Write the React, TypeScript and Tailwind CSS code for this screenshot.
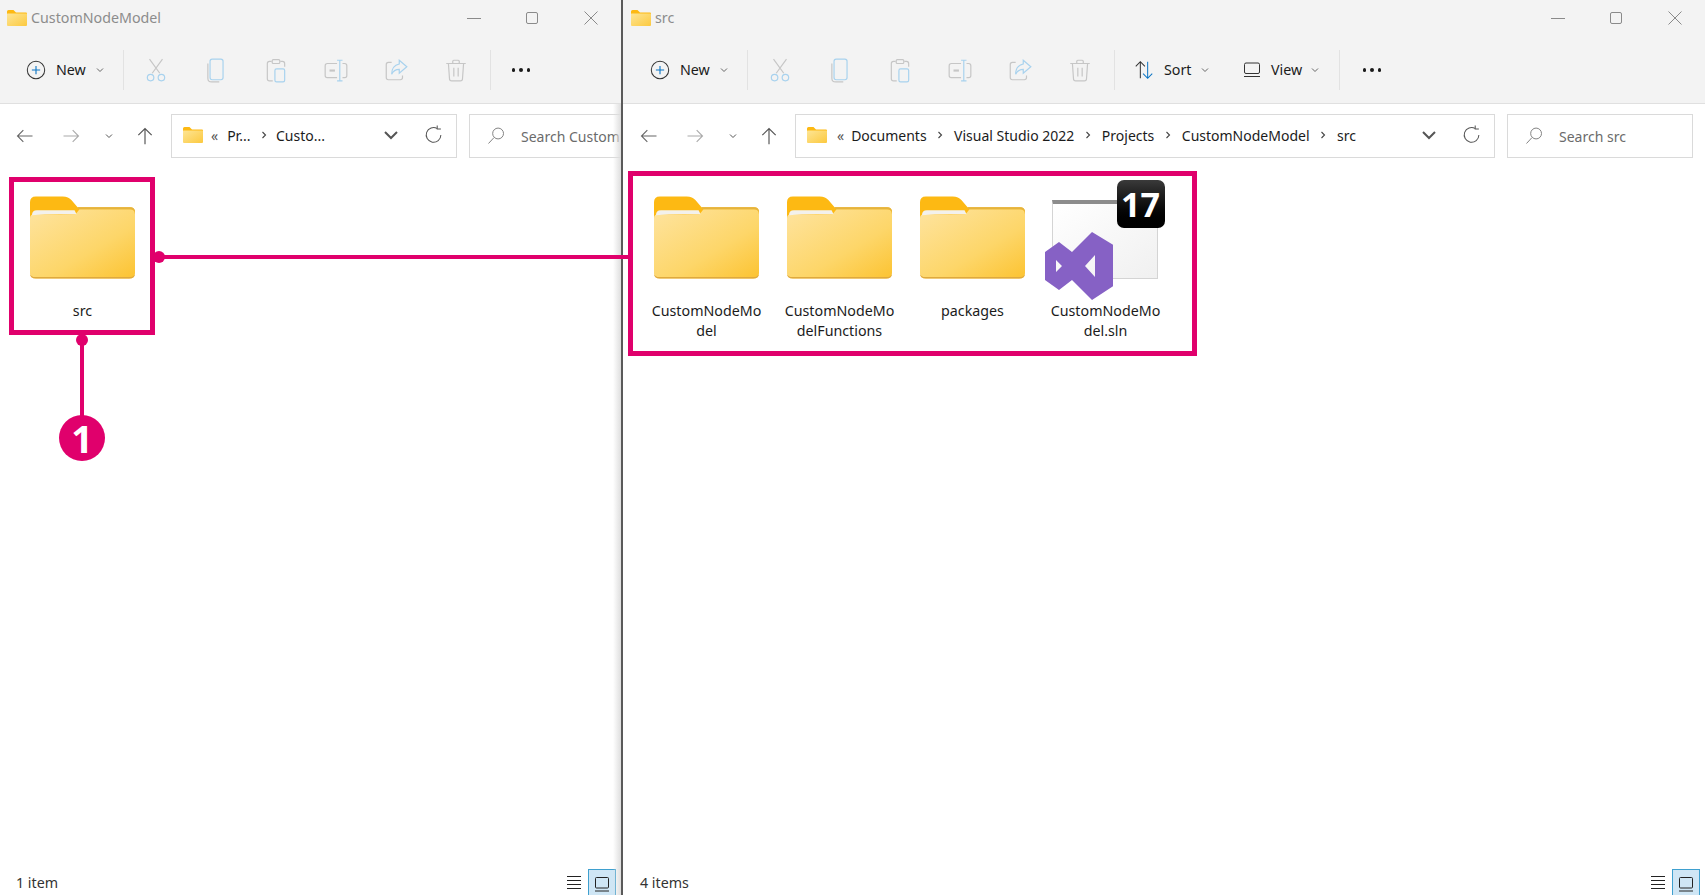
import React from 'react'

const pink = '#e0006c'

// small stroke icon wrapper, all toolbar glyphs are drawn in a 24 box
const Ico = ({ children, size = 24 }: { children: React.ReactNode; size?: number }) => (
    <svg width={size} height={size} viewBox="0 0 24 24" fill="none" strokeWidth="1.1" className="shrink-0">
        {children}
    </svg>
)

const FolderSmall = () => (
    <svg width="20" height="16" viewBox="0 0 20 16" className="shrink-0">
        <defs>
            <linearGradient id="fs" x1="0" y1="0" x2="1" y2="1">
                <stop offset="0" stopColor="#fde595" />
                <stop offset="1" stopColor="#fcc93f" />
            </linearGradient>
        </defs>
        <path d="M0 1.5Q0 0 1.5 0H6.5L9 2.5H19Q20 2.5 20 3.5V5H0Z" fill="#fdb913" />
        <path d="M0 4Q0 3.5 .5 3.5H19.5Q20 3.5 20 4V15Q20 16 19 16H1Q0 16 0 15Z" fill="url(#fs)" />
    </svg>
)

const FolderBig = () => (
    <svg width="105" height="83" viewBox="0 0 106 83" className="shrink-0">
        <defs>
            <linearGradient id="fb" x1="0.05" y1="0" x2="0.95" y2="1">
                <stop offset="0" stopColor="#fee39d" />
                <stop offset="0.6" stopColor="#fdd669" />
                <stop offset="1" stopColor="#fcc434" />
            </linearGradient>
        </defs>
        <path d="M0 6Q0 0 6 0H33Q39 0 42 4L48 11H101Q106 11 106 16V30H0Z" fill="#fdb913" />
        <path d="M0 22Q0 18 4 18H46L50 13H101Q106 13 106 18V77Q106 83 100 83H6Q0 83 0 77Z" fill="url(#fb)" />
        <path d="M2 19Q2 14 7 14H45L47 18Q20 17 2 19Z" fill="#f3f1ec" />
        <path d="M0 77Q0 81.500 6 81.500H100Q106 81.500 106 77V77.500Q106 83 100 83H6Q0 83 0 77.500Z" fill="#dfa93e" />
        <path d="M48 11H101Q106 11 106 16V18Q106 13 101 13H49Z" fill="#e4b33f" />
    </svg>
)

const SlnLogo = () => (
    <svg width="68" height="68" viewBox="0 0 68 68">
        <path
            fillRule="evenodd"
            fill="#8661c5"
            d="M47 0L68 12.700V54.300L47 68L27 48L14 58L0 48V20L14 10L27 20ZM11 28V40L17 34ZM50 23L40 34L50 45Z"
        />
    </svg>
)

const Chevron = ({ size = 10, color = '#666' }: { size?: number; color?: string }) => (
    <svg width={size} height={size} viewBox="0 0 10 10" fill="none" stroke={color} strokeWidth="1" className="shrink-0">
        <path d="M2 3.500L5 6.500L8 3.500" />
    </svg>
)

const Sep = () => (
    <span className="w-[27.500px] flex justify-center shrink-0">
        <svg width="8" height="10" viewBox="0 0 8 10" fill="none" stroke="#444" strokeWidth="1.100">
            <path d="M2.500 2L5.500 5L2.500 8" />
        </svg>
    </span>
)

const gray = '#c6c6c6'
const blue = '#a8d2ee'

const CmdIcons = () => (
    <>
        <div className="w-[60px] flex justify-center">
            <Ico size={26}>
                <path d="M6 2L15.500 15M18 2L8.500 15" stroke={gray} />
                <circle cx="7" cy="19" r="3" stroke={blue} />
                <circle cx="17" cy="19" r="3" stroke={blue} />
            </Ico>
        </div>
        <div className="w-[60px] flex justify-center">
            <Ico size={26}>
                <rect x="6.500" y="2" width="12" height="19" rx="2" stroke={blue} />
                <path d="M4.500 6V19.500Q4.500 23 8 23H15" stroke={gray} />
            </Ico>
        </div>
        <div className="w-[60px] flex justify-center">
            <Ico size={26}>
                <path d="M8 4H6Q4 4 4 6V20Q4 22 6 22H9M16 4H18Q20 4 20 6V9" stroke={gray} />
                <rect x="8.500" y="2.500" width="7" height="3.500" rx="1" stroke={gray} />
                <rect x="11" y="11" width="9" height="12" rx="1.500" stroke={blue} />
            </Ico>
        </div>
        <div className="w-[60px] flex justify-center">
            <Ico size={26}>
                <path d="M13 6H4Q2 6 2 8V17Q2 19 4 19H13M18 6H20Q22 6 22 8V17Q22 19 20 19H18" stroke={gray} />
                <path d="M6 12.500H11" stroke={gray} strokeWidth="2" />
                <path d="M13 3H18M13 22H18M15.500 3V22" stroke={blue} />
            </Ico>
        </div>
        <div className="w-[60px] flex justify-center">
            <Ico size={26}>
                <path d="M8 5H5Q3 5 3 7V19Q3 21 5 21H16Q18 21 18 19V17" stroke={gray} />
                <path d="M15 3L22 9L15 15V11.500Q10 11.500 8 16Q8 8 15 6.500Z" stroke={blue} />
            </Ico>
        </div>
        <div className="w-[60px] flex justify-center">
            <Ico size={26}>
                <path d="M3 6H21M9 6V4Q9 3 10 3H14Q15 3 15 4V6M5 6L6 20Q6 22 8 22H16Q18 22 18 20L19 6M10 10V18M14 10V18" stroke={gray} />
            </Ico>
        </div>
    </>
)

const Divider = () => <div className="w-px h-[40px] bg-[#e2e2e2] shrink-0" />

const Dots = () => (
    <div className="w-[60px] flex justify-center gap-[4px]">
        <span className="w-[3.500px] h-[3.500px] rounded-full bg-[#1a1a1a]" />
        <span className="w-[3.500px] h-[3.500px] rounded-full bg-[#1a1a1a]" />
        <span className="w-[3.500px] h-[3.500px] rounded-full bg-[#1a1a1a]" />
    </div>
)

const NewButton = () => (
    <div className="w-[98px] flex items-center shrink-0">
        <Ico size={22}>
            <circle cx="12" cy="12" r="9.500" stroke="#333" />
            <path d="M12 7.500V16.500M7.500 12H16.500" stroke="#0a74c4" strokeWidth="1.200" />
        </Ico>
        <span className="ml-[9px] w-[33px] text-[#1b1b1b]">New</span>
        <span className="ml-[6px]"><Chevron /></span>
    </div>
)

const WindowControls = () => (
    <div className="flex items-center ml-auto">
        <svg width="14" height="14" viewBox="0 0 14 14" stroke="#8a8a8a" fill="none"><path d="M0 7.500H14" /></svg>
        <svg width="14" height="14" viewBox="0 0 14 14" stroke="#8a8a8a" fill="none" className="ml-[44px]"><rect x="1.500" y="1.500" width="11" height="11" rx="1.500" /></svg>
        <svg width="16" height="16" viewBox="0 0 16 16" stroke="#8a8a8a" fill="none" className="ml-[44px]"><path d="M1.500 1.500L14.500 14.500M14.500 1.500L1.500 14.500" /></svg>
    </div>
)

const NavButtons = () => (
    <>
        <div className="w-[50px] flex justify-center shrink-0">
            <Ico size={20}><path d="M21 12H3M10 5L3 12L10 19" stroke="#666" strokeWidth="1.300" /></Ico>
        </div>
        <div className="w-[42px] flex justify-center shrink-0">
            <Ico size={20}><path d="M3 12H21M14 5L21 12L14 19" stroke="#aaa" strokeWidth="1.300" /></Ico>
        </div>
        <div className="w-[34px] flex justify-center shrink-0"><Chevron color="#555" /></div>
        <div className="w-[38px] flex justify-center shrink-0">
            <Ico size={20}><path d="M12 22V3M4 11L12 3L20 11" stroke="#555" strokeWidth="1.400" /></Ico>
        </div>
    </>
)

const AddressEnd = () => (
    <>
        <span className="ml-auto"><Chevron size={20} color="#555" /></span>
        <span className="ml-[22px] mr-[11px]">
            <Ico size={22}>
                <path d="M19.500 12A8 8 0 1 1 15.500 5M15.500 1.500V5.500H19.500" stroke="#555" strokeWidth="1.100" />
            </Ico>
        </span>
    </>
)

const SearchBox = ({ label, className }: { label: string; className: string }) => (
    <div className={`h-[44px] border border-[#dadada] flex items-center pl-[16px] shrink-0 whitespace-nowrap text-[14px] ${className}`}>
        <Ico size={20}>
            <circle cx="14.500" cy="9" r="6.500" stroke="#777" />
            <path d="M9.500 14L3 21" stroke="#777" />
        </Ico>
        <span className="ml-[15px] text-[#6b6b6b]">{label}</span>
    </div>
)

const Tile = ({ lines, children }: { lines: string[]; children: React.ReactNode }) => (
    <div className="w-[133px] flex flex-col items-center shrink-0">
        <div className="relative h-[83px] w-[106px]">{children}</div>
        <div className="mt-[22px] text-center text-[#1b1b1b] leading-[20px]">
            {lines.map((line) => <div key={line}>{line}</div>)}
        </div>
    </div>
)

const StatusBar = ({ label }: { label: string }) => (
    <div className="h-[26px] flex items-end shrink-0">
        <span className="ml-[16px] mb-[2px] text-[#333]">{label}</span>
        <div className="ml-auto mr-[5px] flex items-center">
            <svg width="16" height="14" viewBox="0 0 16 14" stroke="#222" fill="none" className="mr-[6px]">
                <path d="M1 1.500H15M1 5.500H15M1 9.500H15M1 13.500H15" />
            </svg>
            <div className="w-[28px] h-[26px] bg-[#cfe6f5] border border-[#3fa0cf] border-b-0 flex items-center justify-center pt-[3px]">
                <svg width="16" height="15" viewBox="0 0 16 15" stroke="#222" fill="none">
                    <rect x="1.500" y=".5" width="13" height="10.500" rx="1" />
                    <path d="M1 14H15" />
                </svg>
            </div>
        </div>
    </div>
)

export default function App() {
    return (
        <div
            className="w-[1705px] h-[895px] flex overflow-hidden bg-white text-[14.25px]"
            style={{ fontFamily: '"Noto Sans", "Open Sans", sans-serif' }}
        >
            {/* left window */}
            <div className="relative w-[621px] h-full flex flex-col shrink-0 overflow-hidden">
                <div className="bg-[#f3f3f3] h-[104px] border-b border-[#e0e0e0] shrink-0">
                    <div className="h-[35px] flex items-center pl-[7px] pr-[22px]">
                        <FolderSmall />
                        <span className="ml-[4px] text-[#8c8c8c]">CustomNodeModel</span>
                        <WindowControls />
                    </div>
                    <div className="h-[68px] flex items-center pl-[25px] pt-[2px]">
                        <NewButton />
                        <Divider />
                        <div className="ml-[2px] flex items-center"><CmdIcons /></div>
                        <div className="ml-[4px]"><Divider /></div>
                        <Dots />
                    </div>
                </div>
                <div className="h-[66px] flex items-center shrink-0 pb-[2px]">
                    <NavButtons />
                    <div className="ml-[7px] w-[286px] h-[44px] border border-[#dadada] flex items-center pl-[11px] pb-[2px] shrink-0 text-[#1b1b1b] text-[14px]">
                        <FolderSmall />
                        <span className="ml-[8px] text-[#555]">«</span>
                        <span className="ml-[9px]">Pr...</span>
                        <Sep />
                        <span className="-ml-[2px]">Custo...</span>
                        <AddressEnd />
                    </div>
                    <SearchBox label="Search CustomNodeModel" className="ml-[12px] w-[220px]" />
                </div>
                <div className="flex-1 pl-[16px] pt-[26px] flex">
                    <Tile lines={['src']}><FolderBig /></Tile>
                </div>
                <StatusBar label="1 item" />
                {/* soft edge against the other window */}
                <div className="absolute right-0 top-[104px] bottom-0 w-[8px] bg-gradient-to-r from-transparent to-[#dedede]" />
            </div>

            <div className="w-[2px] h-full bg-[#5a5a5a] shrink-0" />

            {/* right window */}
            <div className="relative flex-1 h-full flex flex-col pl-px">
                <div className="bg-[#f3f3f3] h-[104px] border-b border-[#e0e0e0] shrink-0 -ml-px pl-px">
                    <div className="h-[35px] flex items-center pl-[7px] pr-[22px]">
                        <FolderSmall />
                        <span className="ml-[4px] text-[#8c8c8c]">src</span>
                        <WindowControls />
                    </div>
                    <div className="h-[68px] flex items-center pl-[25px] pt-[2px]">
                        <NewButton />
                        <Divider />
                        <div className="ml-[2px] flex items-center"><CmdIcons /></div>
                        <div className="ml-[4px]"><Divider /></div>
                        <div className="ml-[18px] flex items-center w-[84px] shrink-0">
                            <Ico size={22}>
                                <path d="M8 21V3M3 8L8 3L13 8" stroke="#333" />
                                <path d="M16 3V21M11 16L16 21L21 16" stroke="#0a74c4" />
                            </Ico>
                            <span className="ml-[9px] text-[#1b1b1b] w-[33px]">Sort</span>
                            <span className="ml-[3px]"><Chevron /></span>
                        </div>
                        <div className="ml-[26px] flex items-center w-[92px] shrink-0">
                            <svg width="18" height="16" viewBox="0 0 18 16" stroke="#333" fill="none" className="shrink-0">
                                <rect x="1.500" y="1" width="15" height="10.500" rx="1.500" />
                                <path d="M1 14.500H17" />
                            </svg>
                            <span className="ml-[10px] text-[#1b1b1b] w-[34px]">View</span>
                            <span className="ml-[5px]"><Chevron /></span>
                        </div>
                        <div className="ml-[4px]"><Divider /></div>
                        <div className="ml-[2px]"><Dots /></div>
                    </div>
                </div>
                <div className="h-[66px] flex items-center shrink-0 pb-[2px]">
                    <NavButtons />
                    <div className="ml-[7px] w-[700px] h-[44px] border border-[#dadada] flex items-center pl-[11px] pb-[2px] shrink-0 text-[#1b1b1b] whitespace-nowrap text-[14px]">
                        <FolderSmall />
                        <span className="ml-[10px] text-[#555]">«</span>
                        <span className="ml-[7px]">Documents</span>
                        <Sep />
                        <span>Visual Studio 2022</span>
                        <Sep />
                        <span>Projects</span>
                        <Sep />
                        <span>CustomNodeModel</span>
                        <Sep />
                        <span>src</span>
                        <AddressEnd />
                    </div>
                    <SearchBox label="Search src" className="ml-[12px] w-[186px]" />
                </div>
                <div className="flex-1 pl-[16px] pt-[26px] flex">
                    <Tile lines={['CustomNodeMo', 'del']}><FolderBig /></Tile>
                    <Tile lines={['CustomNodeMo', 'delFunctions']}><FolderBig /></Tile>
                    <Tile lines={['packages']}><FolderBig /></Tile>
                    <Tile lines={['CustomNodeMo', 'del.sln']}>
                        <div className="absolute left-[-1px] top-[4px] w-[106px] h-[79px] bg-gradient-to-br from-white to-[#f0f0f0] border border-[#d4d4d4] border-t-[4px] border-t-[#8c8c8c]" />
                        <div className="absolute left-[64px] top-[-16px] w-[48px] h-[48px] rounded-[7px] bg-gradient-to-b from-[#3a3a3a] to-black flex items-center justify-center text-white font-bold text-[34px] leading-none" style={{ fontFamily: '"Open Sans", sans-serif' }}>
                            17
                        </div>
                        <div className="absolute left-[-8px] top-[36px]"><SlnLogo /></div>
                    </Tile>
                </div>
                <StatusBar label="4 items" />
            </div>

            {/* pink annotation over both windows */}
            <div className="absolute left-[9px] top-[177px] w-[146px] h-[158px] border-[5px] border-[#e0006c]" />
            <div className="absolute left-[628px] top-[171px] w-[569px] h-[185px] border-[5px] border-[#e0006c]" />
            <div className="absolute left-[155px] top-[255px] w-[475px] h-[4px] bg-[#e0006c]" />
            <div className="absolute left-[153px] top-[251px] w-[12px] h-[12px] rounded-full bg-[#e0006c]" />
            <div className="absolute left-[80px] top-[340px] w-[4px] h-[80px] bg-[#e0006c]" />
            <div className="absolute left-[76px] top-[334px] w-[12px] h-[12px] rounded-full bg-[#e0006c]" />
            <div
                className="absolute left-[59px] top-[415px] w-[46px] h-[46px] rounded-full flex items-center justify-center text-white font-bold text-[38px] leading-none"
                style={{ backgroundColor: pink, fontFamily: '"Open Sans", sans-serif' }}
            >
                1
            </div>
        </div>
    )
}
